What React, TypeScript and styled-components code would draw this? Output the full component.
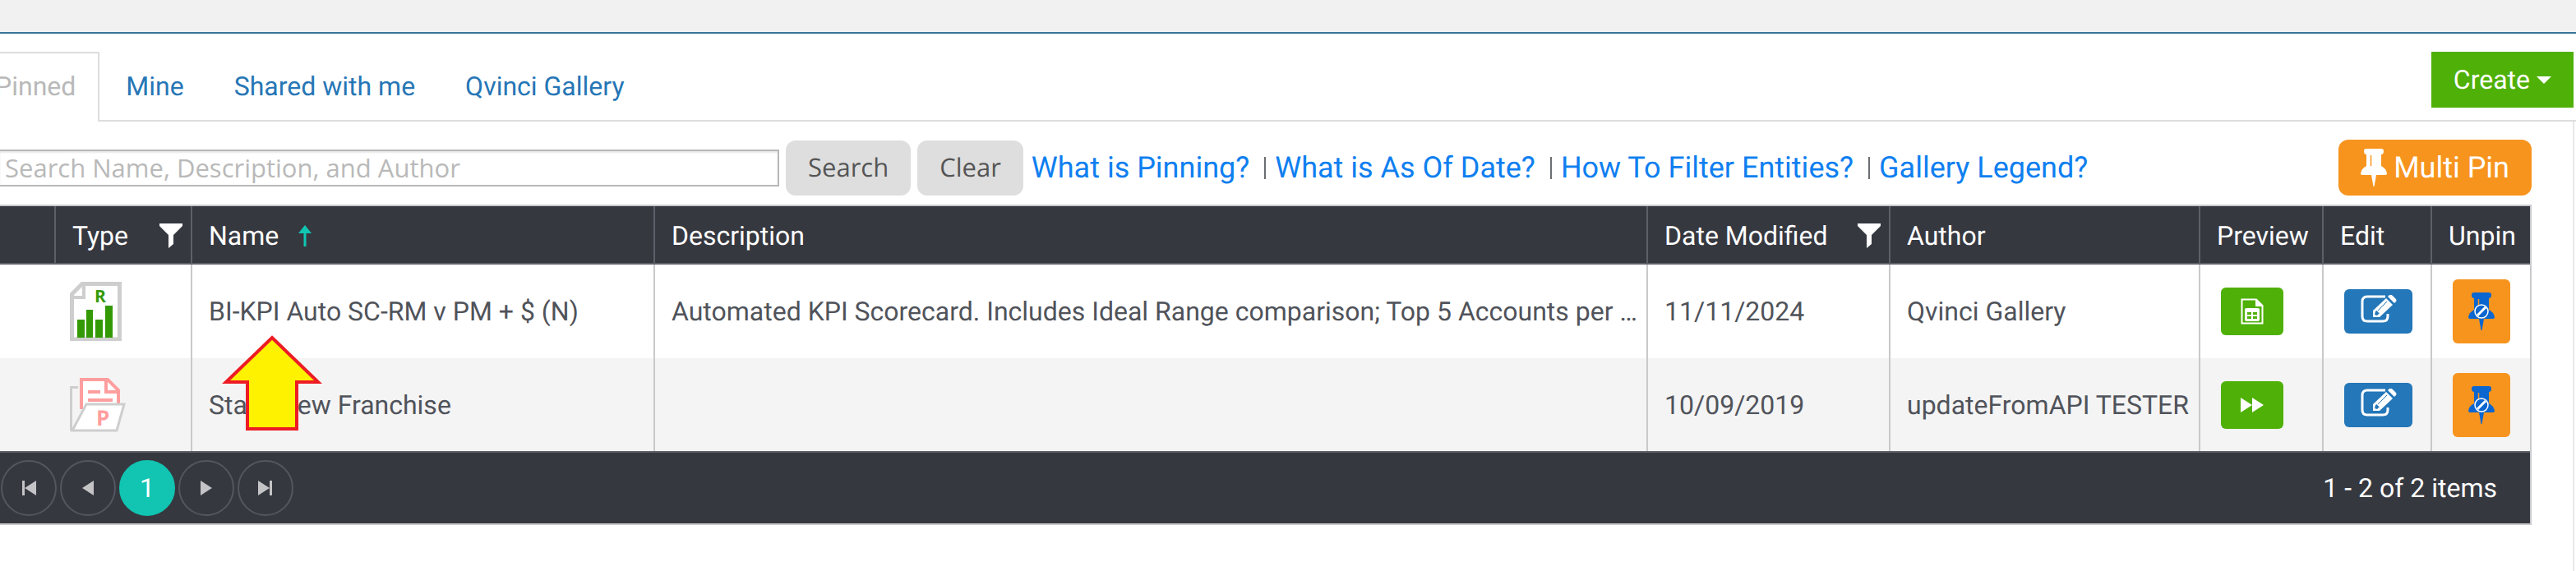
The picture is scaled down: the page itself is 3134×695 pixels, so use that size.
import React from "react";
import styled, { createGlobalStyle } from "styled-components";

const GlobalStyle = createGlobalStyle`
  * { box-sizing: border-box; }
  body {
    margin: 0;
    background: #fff;
    color: #50535a;
    font: 32px/40px Roboto, "Liberation Sans", sans-serif;
    text-rendering: geometricPrecision;
    overflow-x: hidden;
  }
  a { text-decoration: none; }
  button { font: inherit; border: 0; padding: 0; margin: 0; cursor: pointer; text-rendering: inherit; }
  svg { display: block; flex: none; }
`;

const Page = styled.div`
  display: flex;
  flex-direction: column;
`;

const TopStrip = styled.header`
  height: 41px;
  background: #f1f1f1;
  border-bottom: 2px solid #39749a;
`;

const TabRow = styled.div`
  display: flex;
  align-items: flex-start;
  justify-content: space-between;
  height: 107px;
  padding: 22px 3px 0 0;
  border-bottom: 2px solid #dddddd;
`;

const Tabs = styled.nav`
  display: flex;
`;

const Tab = styled.a<{ $active?: boolean }>`
  height: 85px;
  padding: 20px 27px 0 32px;
  border-style: solid;
  border-width: 2px 2px 0 0;
  border-color: ${(p) => (p.$active ? "#dddddd" : "transparent")};
  background: ${(p) => (p.$active ? "#fff" : "transparent")};
  color: ${(p) => (p.$active ? "#b9b9b9" : "#2676b6")};
  ${(p) => p.$active && "padding-left: 0; text-indent: -6px;"}
`;

const CreateButton = styled.button`
  display: flex;
  align-items: center;
  gap: 8px;
  height: 68px;
  padding: 0 27px;
  background: #4fb007;
  color: #fff;
`;

const Panel = styled.main`
  min-height: 547px;
  margin-right: 2px;
  padding: 22px 50px 0 0;
  border-right: 2px solid #e8e8e8;
`;

const Toolbar = styled.div`
  display: flex;
  align-items: center;
  gap: 8px;
  height: 68px;
  margin-bottom: 11px;
`;

const SearchInput = styled.input`
  width: 948px;
  height: 45px;
  padding: 0 6px;
  border: 2px solid #b8b8b8;
  border-left: 0;
  box-shadow: inset 0 2px 2px #e8e8e8;
  font: 31px/40px "Open Sans", "Noto Sans", sans-serif;
  color: #50535a;
  &::placeholder { color: #b9b9b9; opacity: 1; }
`;

const GreyButton = styled.button`
  height: 67px;
  padding: 0 27px;
  border-radius: 12px;
  background: #dedede;
  color: #555;
  font: 31px/40px "Open Sans", "Noto Sans", sans-serif;
`;

const HelpLinks = styled.div`
  display: flex;
  flex: 1;
  padding-left: 2px;
  font-size: 36px;
  white-space: nowrap;
`;

const HelpLink = styled.a`
  display: flex;
  align-items: center;
  color: #0f7ff0;
  & + &::before {
    content: "";
    width: 2px;
    height: 27px;
    margin: 0 11px 0 18px;
    background: #6b6e73;
  }
`;

const MultiPinButton = styled.button`
  display: flex;
  align-items: center;
  gap: 8px;
  height: 68px;
  padding: 0 27px;
  border-radius: 12px;
  background: #f7941e;
  color: #fff;
  font-size: 36px;
`;

const Grid = styled.section`
  position: relative;
  border: 2px solid #c9c9cc;
  border-left: 0;
`;

const Table = styled.table`
  width: 100%;
  table-layout: fixed;
  border-collapse: separate;
  border-spacing: 0;
`;

const Th = styled.th`
  height: 71px;
  padding: 2px 10px 0 20px;
  border-bottom: 2px solid #5d5f69;
  background: #363840;
  color: #fff;
  font-weight: 400;
  text-align: left;
  white-space: nowrap;
  &:not(:last-child) { border-right: 2px solid #5d5f69; }
`;

const HeadLine = styled.div<{ $spread?: boolean }>`
  display: flex;
  align-items: center;
  justify-content: ${(p) => (p.$spread ? "space-between" : "flex-start")};
  gap: 24px;
`;

const Row = styled.tr`
  background: #fff;
  &:nth-child(even) { background: #f4f4f4; }
`;

const Td = styled.td`
  height: 114px;
  padding: 0 10px 0 20px;
  overflow: hidden;
  text-overflow: ellipsis;
  white-space: nowrap;
  ${Row}:nth-child(even) > & { height: 113px; }
  &:not(:first-child):not(:last-child) { border-right: 2px solid #c9c9c9; }
`;

const IconCell = styled(Td)`
  padding-left: 17px;
`;

const IconButton = styled.button<{ $kind: "preview" | "edit" | "unpin" }>`
  display: flex;
  align-items: center;
  justify-content: center;
  border-radius: 6px;
  margin-left: 8px;
  ${(p) =>
    ({
      preview: "width: 76px; height: 58px; background: #4fb007;",
      edit: "width: 83px; height: 54px; padding-bottom: 6px; background: #2477b8;",
      unpin: "width: 70px; height: 78px; background: #f7941e;",
    })[p.$kind]}
`;

const Pager = styled.footer`
  display: flex;
  align-items: center;
  gap: 4px;
  height: 88px;
  padding: 0 40px 0 1px;
  border-top: 2px solid #5d5f69;
  background: #363840;
  color: #fff;
`;

const PageButton = styled.button<{ $current?: boolean }>`
  display: flex;
  align-items: center;
  justify-content: center;
  width: 68px;
  height: 68px;
  border: 2px solid ${(p) => (p.$current ? "#11c5b2" : "#545660")};
  border-radius: 50%;
  background: ${(p) => (p.$current ? "#11c5b2" : "transparent")};
  color: ${(p) => (p.$current ? "#fff" : "#c4c4c6")};
`;

const PageInfo = styled.span`
  margin-left: auto;
`;

/* Callout that lies over the rows and points at the report name. */
const Callout = styled.svg`
  position: absolute;
  left: 269px;
  top: 156px;
`;

const Funnel = () => (
  <svg width="28" height="30" viewBox="0 0 28 30" fill="#fff" aria-hidden="true">
    <path d="M0 0h28v3L17 14v11l-6 5V14L0 3z" />
  </svg>
);

const SortUp = () => (
  <svg width="16" height="26" viewBox="0 0 16 26" fill="#11c5b2" aria-hidden="true">
    <path d="M8 0l8 10H9.500V26h-3V10H0z" />
  </svg>
);

const ReportIcon = () => (
  <svg width="63" height="72" viewBox="0 0 63 72" role="img" aria-label="Report">
    <path d="M15 2.500H60.500V70H2.500V15z" fill="#fff" stroke="#cecece" strokeWidth="5" />
    <path d="M17 3v16H2" fill="none" stroke="#cecece" strokeWidth="4" />
    <g fill="#339a05">
      <path d="M9 46h9v22H9zM20 34h8v34h-8zM31 46h9v22h-9zM43 29h9v39h-9z" />
      <text x="30" y="25" fontSize="21" fontWeight="700" fontFamily="Open Sans">R</text>
    </g>
  </svg>
);

const PackageIcon = () => (
  <svg width="68" height="66" viewBox="0 0 68 66" role="img" aria-label="Package">
    <path d="M10 11.500H1.500V64" fill="none" stroke="#cecece" strokeWidth="3" />
    <path d="M14 38V2H46L59 15V32" fill="#fff" stroke="#ff9e9e" strokeWidth="4" />
    <path d="M44 2v15h16M22 17h15M22 27h30" fill="none" stroke="#ff9e9e" strokeWidth="4" />
    <path d="M20 32H66L57 64H3z" fill="#fff" stroke="#cecece" strokeWidth="3" />
    <text x="32" y="58" fontSize="26" fontWeight="700" fontFamily="Open Sans" fill="#ff9e9e">P</text>
  </svg>
);

const SheetIcon = () => (
  <svg width="28" height="32" viewBox="0 0 28 32" aria-hidden="true">
    <path d="M1.500 1.500H19L26.500 9V30.500H1.500z" fill="none" stroke="#fff" strokeWidth="2" />
    <path d="M18 1v9h9z" fill="#fff" />
    <rect x="5" y="12" width="18" height="16" rx="2" fill="#fff" />
    <path d="M8 17h5v3H8zM15 17h5v3h-5zM8 22h5v3H8zM15 22h5v3h-5z" fill="#4fb007" />
  </svg>
);

const ForwardIcon = () => (
  <svg width="28" height="18" viewBox="0 0 28 18" fill="#fff" aria-hidden="true">
    <path d="M0 0l14 9V0l14 9-14 9V9L0 18z" />
  </svg>
);

const EditIcon = () => (
  <svg width="44" height="34" viewBox="0 0 44 34" aria-hidden="true">
    <path d="M30 2H8Q2 2 2 8V26Q2 32 8 32H27Q33 32 33 26V23" fill="none" stroke="#fff" strokeWidth="3" />
    <path d="M15 27V19L31 4l8 8-16 15zM33 2l2-2q2-1 4 1l4 4q1 2 0 3l-2 2z" fill="#fff" />
    <path d="M21 19L32 8" stroke="#2477b8" />
    <path d="M18 20l2-1 1 2 2 1-3 3-3-1z" fill="#2477b8" />
  </svg>
);

const PinIcon = ({ color, slit, blocked }: { color: string; slit: string; blocked?: boolean }) => (
  <svg width="32" height="46" viewBox="0 0 32 46" aria-hidden="true">
    <path
      d="M7 0H25Q28 0 28 3Q28 7 25 7V21Q31 24 32 30Q32 32 30 32H19L16.500 46h-1L13 32H2Q0 32 0 30Q1 24 7 21V7Q4 7 4 3Q4 0 7 0z"
      fill={color}
    />
    <path d="M12.500 8V21" stroke={slit} strokeWidth="1.500" />
    {blocked && (
      <g stroke="#fff" fill="#0b66cf">
        <circle cx="16" cy="23" r="8" strokeWidth="1.500" />
        <path d="M11 28L21 18" strokeWidth="3" />
      </g>
    )}
  </svg>
);

const PAGER_SHAPES = {
  first: "M1 0h3v18H1zM18 0v18L4 9z",
  prev: "M16 0v18L2 9z",
  next: "M2 0v18l14-9z",
  last: "M0 0v18l14-9zM14 0h3v18h-3z",
};

const PagerIcon = ({ shape }: { shape: keyof typeof PAGER_SHAPES }) => (
  <svg width="18" height="18" viewBox="0 0 18 18" fill="currentColor" aria-hidden="true">
    <path d={PAGER_SHAPES[shape]} />
  </svg>
);

const COLUMN_WIDTHS = [68, 166, 563, undefined, 295, 377, 150, 132, 119];

const ROWS = [
  {
    type: <ReportIcon />,
    name: "BI-KPI Auto SC-RM v PM + $ (N)",
    description:
      "Automated KPI Scorecard. Includes Ideal Range comparison; Top 5 Accounts per ...",
    date: "11/11/2024",
    author: "Qvinci Gallery",
    preview: <SheetIcon />,
  },
  {
    type: <PackageIcon />,
    name: "Start \u00a0New Franchise",
    description: "",
    date: "10/09/2019",
    author: "updateFromAPI TESTER",
    preview: <ForwardIcon />,
  },
];

export default function App() {
  return (
    <Page>
      <GlobalStyle />
      <TopStrip />
      <TabRow>
        <Tabs aria-label="Report lists">
          <Tab href="#pinned" $active aria-current="page">Pinned</Tab>
          <Tab href="#mine">Mine</Tab>
          <Tab href="#shared">Shared with me</Tab>
          <Tab href="#gallery">Qvinci Gallery</Tab>
        </Tabs>
        <CreateButton type="button">
          Create
          <svg width="18" height="9" viewBox="0 0 18 9" fill="#fff" aria-hidden="true">
            <path d="M0 0h18L9 9z" />
          </svg>
        </CreateButton>
      </TabRow>
      <Panel>
        <Toolbar>
          <SearchInput
            type="text"
            aria-label="Search reports"
            placeholder="Search Name, Description, and Author"
          />
          <GreyButton type="button">Search</GreyButton>
          <GreyButton type="button">Clear</GreyButton>
          <HelpLinks>
            <HelpLink href="#pinning">What is Pinning?</HelpLink>
            <HelpLink href="#as-of-date">What is As Of Date?</HelpLink>
            <HelpLink href="#filter-entities">How To Filter Entities?</HelpLink>
            <HelpLink href="#legend">Gallery Legend?</HelpLink>
          </HelpLinks>
          <MultiPinButton type="button">
            <PinIcon color="#fff" slit="#f7941e" />
            Multi Pin
          </MultiPinButton>
        </Toolbar>
        <Grid>
          <Table>
            <colgroup>
              {COLUMN_WIDTHS.map((width, i) => (
                <col key={i} width={width} />
              ))}
            </colgroup>
            <thead>
              <tr>
                <Th aria-label="Select" />
                <Th><HeadLine $spread>Type<Funnel /></HeadLine></Th>
                <Th aria-sort="ascending"><HeadLine>Name<SortUp /></HeadLine></Th>
                <Th>Description</Th>
                <Th><HeadLine $spread>Date Modified<Funnel /></HeadLine></Th>
                <Th>Author</Th>
                <Th>Preview</Th>
                <Th>Edit</Th>
                <Th>Unpin</Th>
              </tr>
            </thead>
            <tbody>
              {ROWS.map((row) => (
                <Row key={row.name}>
                  <Td />
                  <IconCell>{row.type}</IconCell>
                  <Td>{row.name}</Td>
                  <Td>{row.description}</Td>
                  <Td>{row.date}</Td>
                  <Td>{row.author}</Td>
                  <IconCell><IconButton $kind="preview" aria-label="Preview">{row.preview}</IconButton></IconCell>
                  <IconCell><IconButton $kind="edit" aria-label="Edit"><EditIcon /></IconButton></IconCell>
                  <IconCell>
                    <IconButton $kind="unpin" aria-label="Unpin">
                      <PinIcon color="#0b66cf" slit="#f7941e" blocked />
                    </IconButton>
                  </IconCell>
                </Row>
              ))}
            </tbody>
          </Table>
          <Pager>
            <PageButton aria-label="First page"><PagerIcon shape="first" /></PageButton>
            <PageButton aria-label="Previous page"><PagerIcon shape="prev" /></PageButton>
            <PageButton $current aria-current="page">1</PageButton>
            <PageButton aria-label="Next page"><PagerIcon shape="next" /></PageButton>
            <PageButton aria-label="Last page"><PagerIcon shape="last" /></PageButton>
            <PageInfo>1 - 2 of 2 items</PageInfo>
          </Pager>
          <Callout width="124" height="118" viewBox="0 0 124 118" aria-hidden="true">
            <path
              d="M62 4L118 58H92V115H32V58H6z"
              fill="#fff200"
              stroke="#ed1c24"
              strokeWidth="4"
            />
          </Callout>
        </Grid>
      </Panel>
    </Page>
  );
}
